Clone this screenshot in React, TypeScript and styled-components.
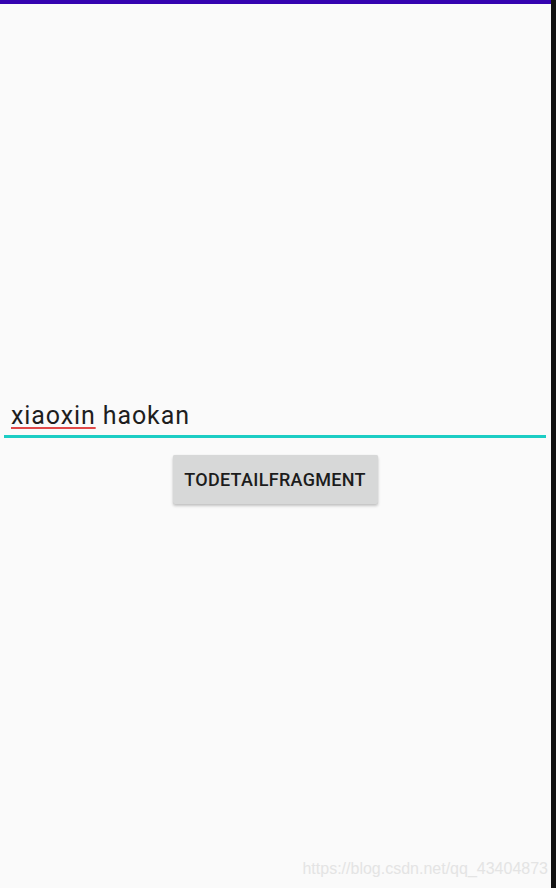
import React from 'react';
import styled, { createGlobalStyle } from 'styled-components';

const GlobalStyle = createGlobalStyle`
  html, body {
    margin: 0;
    padding: 0;
    height: 100%;
    background: #fafafa;
  }
  #root {
    height: 100%;
  }
  *, *::before, *::after {
    box-sizing: border-box;
  }
`;

const Screen = styled.div`
  display: flex;
  width: 556px;
  height: 888px;
  overflow: hidden;
  font-family: Roboto, 'Noto Sans', sans-serif;
`;

const Main = styled.div`
  flex: 1;
  display: flex;
  flex-direction: column;
  background: #fafafa;
  position: relative;
`;

const EdgeStrip = styled.div`
  width: 5px;
  background: #121212;
`;

const StatusBar = styled.div`
  height: 4px;
  background: #3403b0;
`;

const Content = styled.div`
  display: flex;
  flex-direction: column;
  align-items: center;
  padding: 393px 5px 0 4px;
`;

const Field = styled.div`
  align-self: stretch;
  display: flex;
  align-items: flex-end;
  height: 41px;
  padding: 0 0 4px 7px;
  border-bottom: 3px solid #1ccdc4;
  font-size: 25px;
  letter-spacing: 0.9px;
  color: #1e1e1e;
  line-height: 30px;
`;

const Misspelled = styled.span`
  text-decoration: underline;
  text-decoration-color: #e04848;
  text-decoration-thickness: 2px;
  text-underline-offset: 3px;
`;

const Button = styled.button`
  margin-top: 17px;
  width: 205px;
  height: 49px;
  border: none;
  border-radius: 2px;
  background: #d7d8d8;
  box-shadow: 0 2px 3px rgba(0, 0, 0, 0.22), 0 0 1px rgba(0, 0, 0, 0.12);
  font-family: Roboto, 'Noto Sans', sans-serif;
  font-weight: 500;
  font-size: 18px;
  letter-spacing: 0.3px;
  color: #1c1c1c;
  padding: 0;
`;

const Watermark = styled.div`
  position: absolute;
  right: 3px;
  bottom: 10px;
  font-family: 'Liberation Sans', Arial, sans-serif;
  font-size: 16px;
  color: #e4e4e4;
`;

export default function App() {
  return (
    <>
      <GlobalStyle />
      <Screen>
        <Main>
          <StatusBar />
          <Content>
            <Field>
              <span>
                <Misspelled>xiaoxin</Misspelled> haokan
              </span>
            </Field>
            <Button>TODETAILFRAGMENT</Button>
          </Content>
          <Watermark>https://blog.csdn.net/qq_43404873</Watermark>
        </Main>
        <EdgeStrip />
      </Screen>
    </>
  );
}
